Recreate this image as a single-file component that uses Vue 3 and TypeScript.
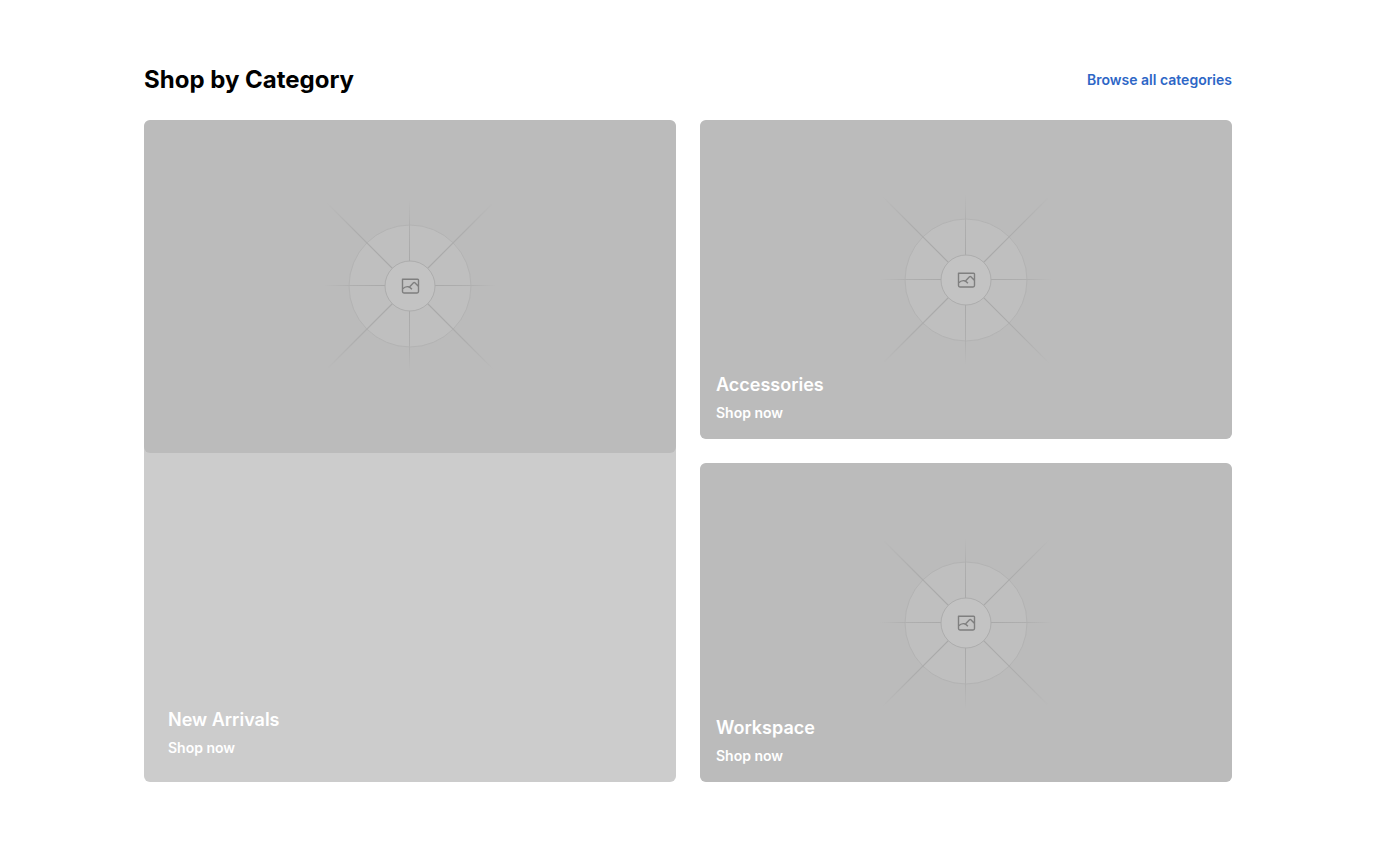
<script setup lang="ts">
interface Category {
  name: string
  featured: boolean
}

const categories: Category[] = [
  { name: 'New Arrivals', featured: true },
  { name: 'Accessories', featured: false },
  { name: 'Workspace', featured: false },
]
</script>

<template>
  <main class="section">
    <header class="heading">
      <h2>Shop by Category</h2>
      <a class="browse" href="#">Browse all categories</a>
    </header>

    <div class="grid">
      <article
        v-for="(category, index) in categories"
        :key="category.name"
        class="card"
        :class="{ featured: category.featured }"
      >
        <div class="media">
          <svg viewBox="-100 -100 200 200" fill="none" aria-hidden="true">
            <defs>
              <radialGradient :id="`ray-${index}`" gradientUnits="userSpaceOnUse" cx="0" cy="0" r="86">
                <stop offset="0.3" stop-color="#a9a9a9" />
                <stop offset="0.7" stop-color="#afafaf" />
                <stop offset="1" stop-color="#bbbbbb" />
              </radialGradient>
              <radialGradient :id="`diagonal-${index}`" gradientUnits="userSpaceOnUse" cx="0" cy="0" r="118">
                <stop offset="0.2" stop-color="#a8a8a8" />
                <stop offset="0.65" stop-color="#adadad" />
                <stop offset="1" stop-color="#bbbbbb" />
              </radialGradient>
            </defs>
            <circle r="61" fill="#bfbfbf" />
            <circle r="61" stroke="#b3b3b3" />
            <path d="M-.5-86V86M-86-.5H86" :stroke="`url(#ray-${index})`" />
            <path d="M-84-84 84 84M84-84-84 84" :stroke="`url(#diagonal-${index})`" stroke-width="1.2" />
            <circle r="25" fill="#c3c3c3" stroke="#adadad" />
            <path
              d="M-7.3-6.7H7.7Q8.5-6.7 8.5-5.9V5.6Q8.5 7 7.1 7H-6.1Q-7.5 7-7.5 5.6V-6.7ZM-7.5 3.1C-5.7 1.1-3.7.3-1.7.7 -.2 1 .9 2 1.9 3.3M-.3.8 3.5-3.2Q4.2-3.8 4.9-3.2L8.5 .4"
              stroke="#7f7f7f"
              stroke-width="1.4"
              stroke-linejoin="round"
            />
          </svg>
        </div>
        <div class="caption">
          <h3>{{ category.name }}</h3>
          <a href="#">Shop now</a>
        </div>
      </article>
    </div>
  </main>
</template>

<style>
body {
  margin: 0;
  background: #fff;
}
</style>

<style scoped>
.section {
  box-sizing: border-box;
  max-width: 1216px;
  margin: 0 auto;
  padding: 64px;
  font-family: Inter, "Liberation Sans", sans-serif;
}

.heading {
  display: flex;
  align-items: center;
  justify-content: space-between;
  margin-bottom: 24px;
}

h2,
h3 {
  margin: 0;
}

h2 {
  font-size: 24px;
  font-weight: 700;
  line-height: 32px;
  color: #000;
}

a {
  font-size: 14px;
  font-weight: 600;
  line-height: 20px;
  text-decoration: none;
}

.browse {
  color: #2d66c6;
}

.grid {
  display: grid;
  grid-template-columns: 1fr 1fr;
  gap: 24px;
}

.card {
  position: relative;
  aspect-ratio: 5 / 3;
  overflow: hidden;
  border-radius: 6px;
  background: #ccc;
}

.featured {
  grid-row: span 2;
  aspect-ratio: auto;
}

.media {
  display: flex;
  align-items: center;
  justify-content: center;
  height: 100%;
  border-radius: 6px;
  background: #bbb;
}

.featured .media {
  height: auto;
  aspect-ratio: 8 / 5;
}

.media svg {
  width: 200px;
  height: 200px;
}

.caption {
  position: absolute;
  bottom: 0;
  left: 0;
  padding: 16px;
  color: #fff;
}

.featured .caption {
  padding: 24px;
}

h3 {
  margin-bottom: 4px;
  font-size: 18px;
  font-weight: 600;
  line-height: 28px;
}

.caption a {
  display: block;
  color: #fff;
}
</style>
